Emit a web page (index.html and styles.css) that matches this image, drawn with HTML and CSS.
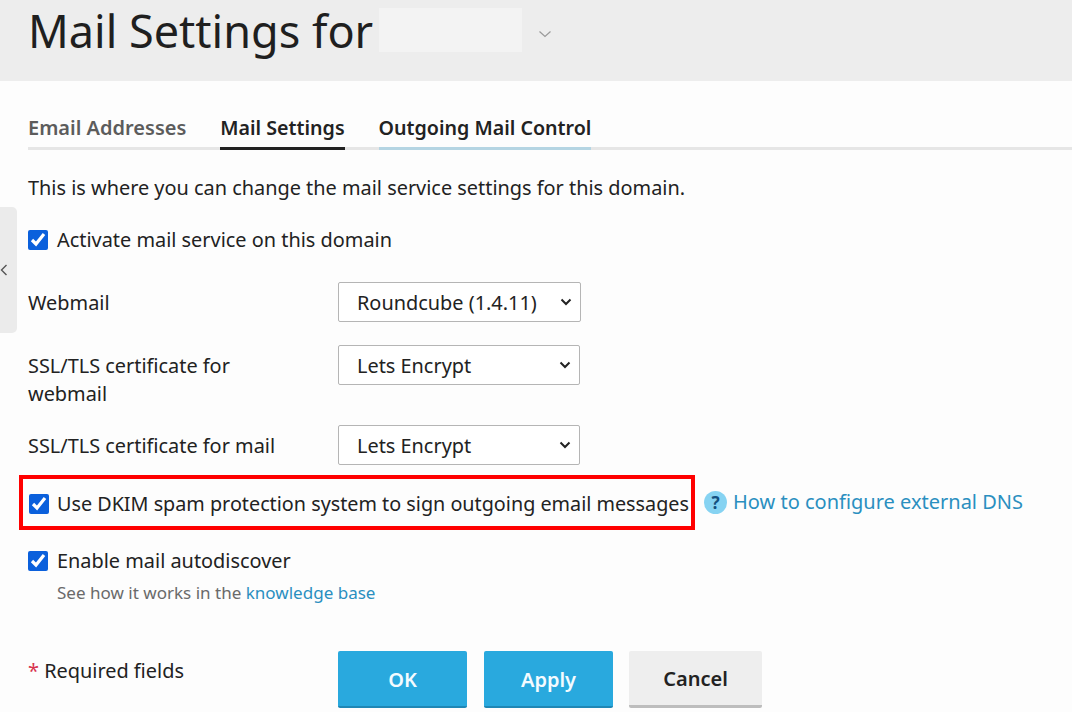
FILE: index.html
```html
<!DOCTYPE html>
<html lang="en">
<head>
<meta charset="utf-8">
<title>Mail Settings</title>
<link rel="stylesheet" href="styles.css">
</head>
<body>
<header class="page-header">
  <h1 class="title">Mail Settings for</h1>
  <div class="domain-mask"></div>
  <svg class="domain-chevron" width="14" height="8" viewBox="0 0 14 8"><path d="M1.5 1.5 7 6.5l5.5-5" fill="none" stroke="#9a9a9a" stroke-width="1.2"/></svg>
</header>
<button class="side-toggle" type="button" aria-label="Collapse">
  <svg width="8" height="12" viewBox="0 0 8 12"><path d="M6.5 1 1.5 6l5 5" fill="none" stroke="#555" stroke-width="1.4"/></svg>
</button>
<main class="content">
  <nav class="tabs">
    <a class="tab tab-muted">Email Addresses</a>
    <a class="tab tab-active">Mail Settings</a>
    <a class="tab tab-hover">Outgoing Mail Control</a>
  </nav>
  <p class="intro">This is where you can change the mail service settings for this domain.</p>
  <label class="check-row check-first"><input type="checkbox" checked><span>Activate mail service on this domain</span></label>
  <div class="field field-webmail">
    <div class="field-label">Webmail</div>
    <div class="select select-wide"><span>Roundcube (1.4.11)</span><svg width="12" height="8" viewBox="0 0 12 8"><path d="M1.5 1.5 6 6l4.500-4.500" fill="none" stroke="#222" stroke-width="2"/></svg></div>
  </div>
  <div class="field field-cert">
    <div class="field-label">SSL/TLS certificate for webmail</div>
    <div class="select"><span>Lets Encrypt</span><svg width="12" height="8" viewBox="0 0 12 8"><path d="M1.5 1.5 6 6l4.500-4.500" fill="none" stroke="#222" stroke-width="2"/></svg></div>
  </div>
  <div class="field field-mail">
    <div class="field-label">SSL/TLS certificate for mail</div>
    <div class="select"><span>Lets Encrypt</span><svg width="12" height="8" viewBox="0 0 12 8"><path d="M1.5 1.5 6 6l4.500-4.500" fill="none" stroke="#222" stroke-width="2"/></svg></div>
  </div>
  <div class="dkim-row">
    <label class="check-row highlight"><input type="checkbox" checked><span>Use DKIM spam protection system to sign outgoing email messages</span></label>
    <span class="help-icon">?</span>
    <a class="link help-link">How to configure external DNS</a>
  </div>
  <label class="check-row check-auto"><input type="checkbox" checked><span>Enable mail autodiscover</span></label>
  <p class="hint">See how it works in the <a class="link">knowledge base</a></p>
  <footer class="actions">
    <div class="required"><span class="star">*</span> Required fields</div>
    <div class="buttons">
      <button class="btn btn-primary" type="button">OK</button>
      <button class="btn btn-primary" type="button">Apply</button>
      <button class="btn btn-cancel" type="button">Cancel</button>
    </div>
  </footer>
</main>
</body>
</html>
```
FILE: styles.css
```css
* { box-sizing: border-box; }
html, body { margin: 0; height: 712px; overflow: hidden; }
body {
  background: #fdfdfd;
  color: #222;
  font-family: "Noto Sans", "Open Sans", sans-serif;
  font-size: 19.9px;
  line-height: 28px;
  position: relative;
}
.page-header {
  height: 81px;
  background: #ededed;
  display: flex;
  align-items: flex-start;
  padding: 0 0 0 28px;
}
.title {
  margin: 0;
  font-size: 45px;
  line-height: 62px;
  font-weight: 400;
  color: #1f1f1f;
  white-space: nowrap;
}
.domain-mask {
  width: 143px;
  height: 44px;
  margin: 8px 0 0 6px;
  background: #f3f3f3;
}
.domain-chevron { margin: 30px 0 0 16px; }
.side-toggle {
  position: absolute;
  left: 0;
  top: 207px;
  width: 17px;
  height: 126px;
  padding: 0;
  border: 0;
  border-radius: 0 5px 5px 0;
  background: #ebebeb;
  display: flex;
  align-items: center;
}
.content { padding: 0 0 0 28px; }
.tabs {
  margin-top: 33px;
  display: flex;
  gap: 34px;
  height: 36px;
  border-bottom: 3px solid #e6e6e6;
}
.tab {
  height: 36px;
  font-size: 19.65px;
  line-height: 28px;
  font-weight: 600;
  border-bottom: 3px solid transparent;
}
.tab-muted { color: #5c5c5c; font-size: 20px; }
.tab-active { color: #222; border-bottom-color: #222; }
.tab-hover { color: #222; border-bottom-color: #b5d5e3; }
.intro { margin: 24px 0 0; }
.check-row { display: flex; align-items: center; gap: 9px; }
.check-row input {
  width: 20px;
  height: 20px;
  margin: 0;
  accent-color: #0b60dc;
  flex: none;
}
.check-first { margin-top: 24px; height: 28px; }
.field { display: flex; align-items: flex-start; }
.field-label { width: 310px; padding: 7px 60px 0 0; }
.field-webmail { margin-top: 28px; }
.field-cert { margin-top: 23px; }
.field-mail { margin-top: 17px; }
.select {
  width: 242px;
  height: 40px;
  padding: 0 8px 0 18px;
  border: 1px solid #b5b5b5;
  border-radius: 2px;
  background: #fff;
  display: flex;
  align-items: center;
  justify-content: space-between;
}
.select span { padding-top: 2px; }
.select-wide { width: 243px; }
.dkim-row {
  margin: 10px 0 0 -9px;
  display: flex;
  align-items: center;
}
.highlight {
  width: 676px;
  height: 55px;
  padding: 2px 0 0 6px;
  border: 4px solid #f00;
  white-space: nowrap;
  font-size: 19.78px;
  gap: 8px;
}
.help-icon {
  margin-left: 9px;
  width: 23px;
  height: 23px;
  border-radius: 50%;
  background: #86d3f2;
  color: #14507f;
  font-size: 17px;
  line-height: 23px;
  font-weight: 700;
  text-align: center;
}
.link { color: #2a8fc0; }
.help-link { margin-left: 6px; margin-top: -1px; font-size: 20px; }
.check-auto { margin-top: 17px; height: 28px; }
.hint {
  margin: 4px 0 0 29px;
  font-size: 17.05px;
  line-height: 28px;
  color: #6a6a6a;
}
.actions {
  margin-top: 44px;
  display: flex;
  align-items: flex-start;
}
.required { width: 310px; padding-top: 6px; }
.star { color: #d8334e; }
.buttons { display: flex; gap: 17px; }
.btn {
  height: 57px;
  padding-top: 2px;
  border: 0;
  border-radius: 2px;
  font-family: inherit;
  font-size: 20px;
  font-weight: 600;
}
.btn-primary {
  width: 129px;
  background: #29a9de;
  color: #f4fbff;
  border-bottom: 2px solid #1f87b5;
}
.btn-cancel {
  width: 133px;
  margin-left: -1px;
  background: #eeeeee;
  color: #222;
  border-bottom: 3px solid #bdbdbd;
}
```
